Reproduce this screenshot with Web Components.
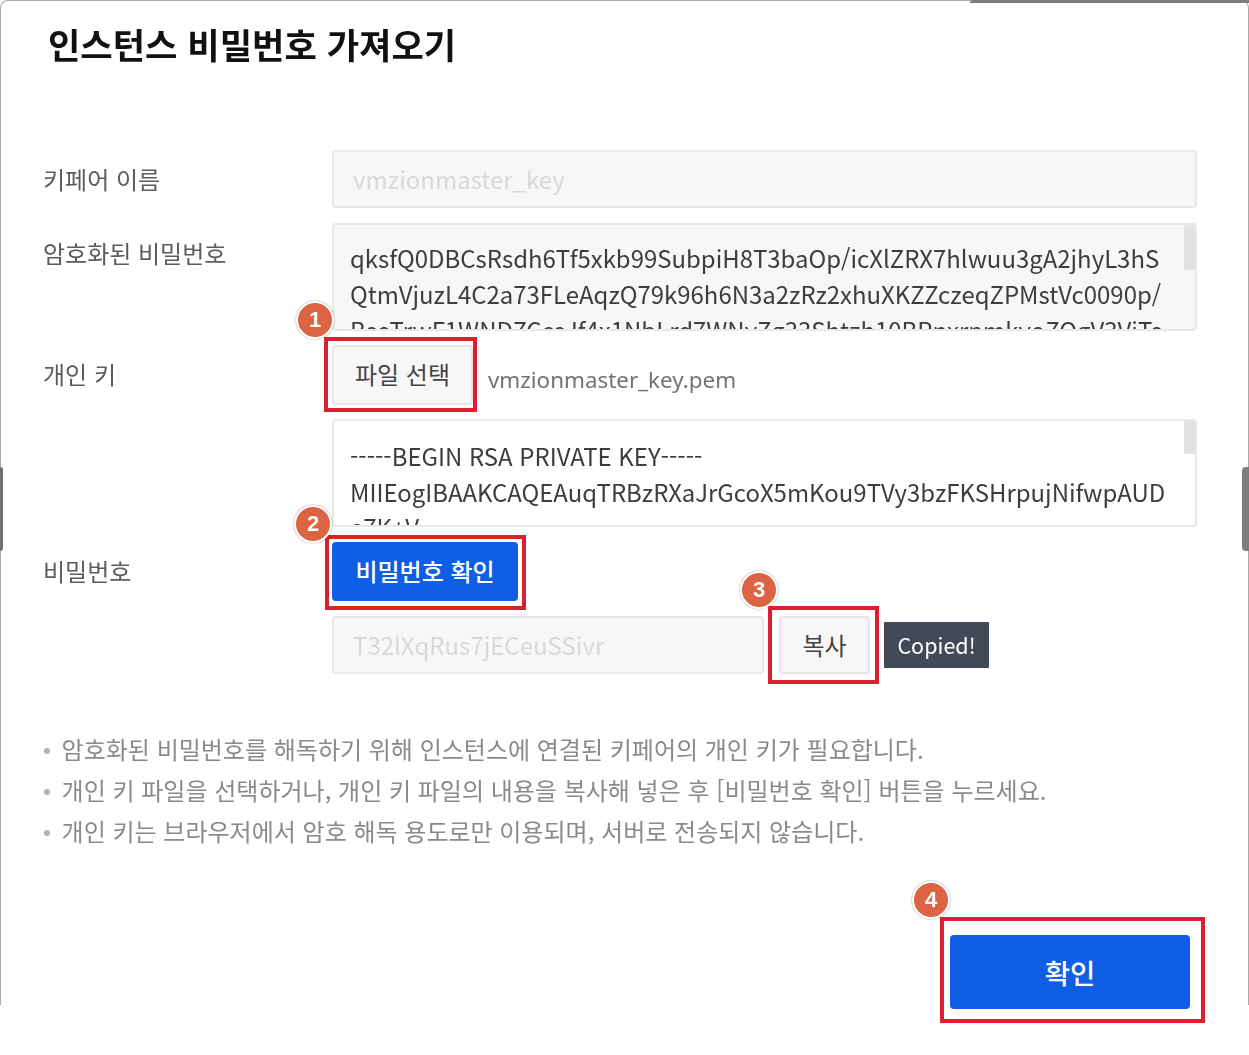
<!DOCTYPE html>
<html lang="ko"><head><meta charset="utf-8"><title>인스턴스 비밀번호 가져오기</title>
<style>
html,body{margin:0;padding:0;background:#fff}
body{height:1055px;font-family:"Noto Sans CJK KR","Noto Sans",sans-serif;color:#333}
</style></head><body>
<guide-dialog heading="인스턴스 비밀번호 가져오기">
  <form-row label="키페어 이름"><text-field value="vmzionmaster_key"></text-field></form-row>
  <form-row label="암호화된 비밀번호" label-shift="1" gap="15">
    <key-box tone="muted">
      <div>qksfQ0DBCsRsdh6Tf5xkb99SubpiH8T3baOp/icXlZRX7hlwuu3gA2jhyL3hS</div>
      <div>QtmVjuzL4C2a73FLeAqzQ79k96h6N3a2zRz2xhuXKZZczeqZPMstVc0090p/</div>
      <div>BseTrwF1WNDZCcsJf4x1NbLrd7WNyZg33Shtzh10BPnxrpmkvoZOgV3ViTs</div>
    </key-box>
  </form-row>
  <form-row label="개인 키" gap="14">
    <div style="display:flex;align-items:center;gap:15px">
      <call-out n="1" top="-8" right="-4" bottom="-7" left="-8" bx="-36" by="-44">
        <action-button width="141" height="60" tone="plain" lift="4">파일 선택</action-button>
      </call-out>
      <file-name>vmzionmaster_key.pem</file-name>
    </div>
  </form-row>
  <form-row gap="14">
    <key-box tone="open">
      <div>-----BEGIN RSA PRIVATE KEY-----</div>
      <div>MIIEogIBAAKCAQEAuqTRBzRXaJrGcoX5mKou9TVy3bzFKSHrpujNifwpAUD</div>
      <div>e7K+V</div>
    </key-box>
  </form-row>
  <form-row label="비밀번호" gap="15">
    <call-out n="2" top="-7" right="-8" bottom="-9" left="-7" bx="-38" by="-37">
      <action-button width="186" height="59" tone="primary" lift="2">비밀번호 확인</action-button>
    </call-out>
  </form-row>
  <form-row gap="15">
    <div style="display:flex;align-items:center">
      <text-field value="T32lXqRus7jECeuSSivr" style="width:432px;flex:none"></text-field>
      <call-out n="3" top="-10" right="-9" bottom="-10" left="-11" bx="-39" by="-45" style="margin-left:15px">
        <action-button width="91" height="58" tone="plain" lift="2">복사</action-button>
      </call-out>
      <copy-tip style="margin-left:14px">Copied!</copy-tip>
    </div>
  </form-row>
  <help-notes>
    <note-item>암호화된 비밀번호를 해독하기 위해 인스턴스에 연결된 키페어의 개인 키가 필요합니다.</note-item>
    <note-item>개인 키 파일을 선택하거나, 개인 키 파일의 내용을 복사해 넣은 후 [비밀번호 확인] 버튼을 누르세요.</note-item>
    <note-item>개인 키는 브라우저에서 암호 해독 용도로만 이용되며, 서버로 전송되지 않습니다.</note-item>
  </help-notes>
  <dialog-footer>
    <call-out n="4" top="-18" right="-15" bottom="-14" left="-10" bx="-38" by="-54">
      <action-button width="240" height="74" tone="primary" size="27.5">확인</action-button>
    </call-out>
  </dialog-footer>
</guide-dialog>
<script>
const FONT='"Noto Sans CJK KR","Noto Sans",sans-serif';
function def(name,build){
  customElements.define(name,class extends HTMLElement{
    constructor(){super();this.attachShadow({mode:'open'});}
    connectedCallback(){this.shadowRoot.innerHTML=build(this);}
  });
}
const a=(el,n,d='')=>el.hasAttribute(n)?el.getAttribute(n):d;

def('guide-dialog',el=>`<style>
:host{display:block;position:relative;height:1005px;box-sizing:border-box;border:solid #aaa;border-width:1px 1px 0 1px;border-radius:8px 8px 0 0;padding:0 51px 0 43px;font-family:${FONT};filter:blur(.45px)}
h1{margin:0 0 0 4px;height:149px;box-sizing:border-box;padding-top:19px;font-size:35.2px;line-height:48px;font-weight:700;color:#111}
.bar{position:absolute;top:-1px;right:-1px;width:279px;height:3px;background:#7d7d7d;border-radius:3px 0 0 0}
.h{position:absolute;top:466px;width:3px;height:84px;background:#6f6f6f;border-radius:0 4px 4px 0;left:-1px}
.h.r{left:auto;right:-1px;width:7px;border-radius:4px 0 0 4px;background:#7c7c7c}
</style><div class="bar"></div><div class="h"></div><div class="h r"></div><h1>${a(el,'heading')}</h1><slot></slot>`);

def('form-row',el=>`<style>
:host{display:grid;grid-template-columns:288px 865px;margin-top:${a(el,'gap','0')}px}
.l{font-size:24px;line-height:58px;height:0;margin-left:-1px;color:#5c5c5c;padding-top:${a(el,'label-shift','0')}px;white-space:nowrap}
</style><div class="l">${a(el,'label')}</div><div><slot></slot></div>`);

def('text-field',el=>`<style>
:host{display:block;box-sizing:border-box;height:58px;background:#f7f7f7;border:2px solid #e8e8e8;border-radius:4px;padding:0 19px;font-size:24px;line-height:54px;color:#d8d8d8;white-space:nowrap;overflow:hidden}
</style>${a(el,'value')}`);

def('key-box',el=>`<style>
:host{display:block;position:relative;box-sizing:border-box;height:108px;border:2px solid #e8e8e8;border-radius:4px;overflow:hidden;padding:${a(el,'tone')==='muted'?'15px':'17px'} 0 0 16px;background:${a(el,'tone')==='muted'?'#f7f7f7':'#fff'};font-size:23.95px;line-height:${a(el,'tone')==='muted'?'36px':'35.5px'};color:#3d3d3d;white-space:nowrap}
.t{position:absolute;top:0;right:0;width:11px;height:45px;background:#e2e2e2}
:host([tone="open"]) .t{height:33px}
</style><div class="t"></div><slot></slot>`);

def('call-out',el=>`<style>
:host{display:inline-block;position:relative;vertical-align:top}
.box{position:absolute;top:${a(el,'top')}px;right:${a(el,'right')}px;bottom:${a(el,'bottom')}px;left:${a(el,'left')}px;border:4px solid #dc1f2e;pointer-events:none}
.n{position:absolute;left:${a(el,'bx')}px;top:${a(el,'by')}px;width:38px;height:38px;box-sizing:border-box;border-radius:50%;background:#dc6444;border:2px solid #fff;box-shadow:0 0 2px rgba(0,0,0,.45);color:#fff;font:700 22px/34px "Liberation Sans",sans-serif;text-align:center}
</style><slot></slot><div class="box"></div><div class="n">${a(el,'n')}</div>`);

def('action-button',el=>{const p=a(el,'tone')==='primary';return `<style>
:host{display:flex;align-items:center;justify-content:center;box-sizing:border-box;width:${a(el,'width')}px;height:${a(el,'height')}px;padding-bottom:${a(el,'lift','0')}px;border-radius:4px;font-size:${a(el,'size','24')}px;font-weight:${p?500:400};white-space:nowrap;background:${p?'#0f5ee6':'#f7f7f7'};color:${p?'#fff':'#444'};border:${p?'0':'2px solid #e6e6e6'}}
</style><slot></slot>`});

def('file-name',el=>`<style>:host{display:block;font:22.4px/32px "Noto Sans",sans-serif;color:#737373;margin-top:10px;white-space:nowrap}</style><slot></slot>`);

def('copy-tip',el=>`<style>:host{display:flex;align-items:center;justify-content:center;width:105px;height:46px;padding-bottom:2px;box-sizing:border-box;background:#434a57;color:#fff;font-size:21.5px;border-radius:1px;white-space:nowrap}</style><slot></slot>`);

def('help-notes',el=>`<style>
:host{display:block;margin-top:54px;font-size:24px;line-height:41px;color:#8a8a8a}
</style><slot></slot>`);

def('note-item',el=>`<style>
:host{display:flex;align-items:center;white-space:nowrap}
i{flex:none;width:6px;height:6px;border-radius:50%;background:#b0b0b0;margin:4px 11.6px 0 0}
</style><i></i><span><slot></slot></span>`);

def('dialog-footer',el=>`<style>:host{display:flex;justify-content:flex-end;margin-top:84px;margin-right:7px}</style><slot></slot>`);
</script>
</body></html>
